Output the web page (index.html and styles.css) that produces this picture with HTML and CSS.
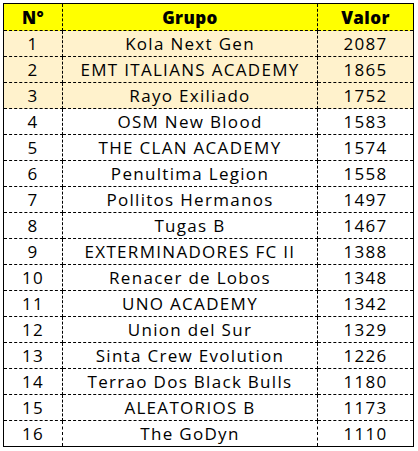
FILE: index.html
```html
<!DOCTYPE html>
<html>
<head>
<meta charset="utf-8">
<link rel="stylesheet" href="styles.css">
</head>
<body>
<table class="rank">
  <thead>
    <tr><th class="c-num">N°</th><th class="c-name">Grupo</th><th class="c-val">Valor</th></tr>
  </thead>
  <tbody>
    <tr class="top"><td>1</td><td>Kola Next Gen</td><td>2087</td></tr>
    <tr class="top"><td>2</td><td>EMT ITALIANS ACADEMY</td><td>1865</td></tr>
    <tr class="top"><td>3</td><td>Rayo Exiliado</td><td>1752</td></tr>
    <tr><td>4</td><td>OSM New Blood</td><td>1583</td></tr>
    <tr><td>5</td><td>THE CLAN ACADEMY</td><td>1574</td></tr>
    <tr><td>6</td><td>Penultima Legion</td><td>1558</td></tr>
    <tr><td>7</td><td>Pollitos Hermanos</td><td>1497</td></tr>
    <tr><td>8</td><td>Tugas B</td><td>1467</td></tr>
    <tr><td>9</td><td>EXTERMINADORES FC II</td><td>1388</td></tr>
    <tr><td>10</td><td>Renacer de Lobos</td><td>1348</td></tr>
    <tr><td>11</td><td>UNO ACADEMY</td><td>1342</td></tr>
    <tr><td>12</td><td>Union del Sur</td><td>1329</td></tr>
    <tr><td>13</td><td>Sinta Crew Evolution</td><td>1226</td></tr>
    <tr><td>14</td><td>Terrao Dos Black Bulls</td><td>1180</td></tr>
    <tr><td>15</td><td>ALEATORIOS B</td><td>1173</td></tr>
    <tr><td>16</td><td>The GoDyn</td><td>1110</td></tr>
  </tbody>
</table>
</body>
</html>
```

FILE: styles.css
```css
html, body {
  margin: 0;
  padding: 0;
  background: #ffffff;
}
body {
  padding: 3px 0 0 3px;
  font-family: "Open Sans", "Noto Sans", sans-serif;
  color: #000000;
}
.rank {
  border-collapse: collapse;
  border: 1px solid #000;
  table-layout: fixed;
  width: 411px;
}
.rank th, .rank td {
  border: 1px dashed #000;
  text-align: center;
  padding: 0;
  font-size: 17px;
  letter-spacing: 1.3px;
  line-height: 1;
  white-space: nowrap;
}
.rank th {
  background: #ffff00;
  font-weight: 800;
  height: 26px;
  letter-spacing: 0.4px;
}
.rank td {
  height: 25px;
  font-weight: 500;
}
.rank tr.top td {
  background: #fff2cc;
}
.rank th:first-child, .rank td:first-child { border-left: 1px solid #000; }
.rank th:last-child, .rank td:last-child { border-right: 1px solid #000; }
.rank thead th { border-top: 1px solid #000; }
.rank tbody tr:last-child td { border-bottom: 1px solid #000; }
.c-num { width: 58px; }
.c-name { width: 254px; }
.c-val { width: auto; }
```
